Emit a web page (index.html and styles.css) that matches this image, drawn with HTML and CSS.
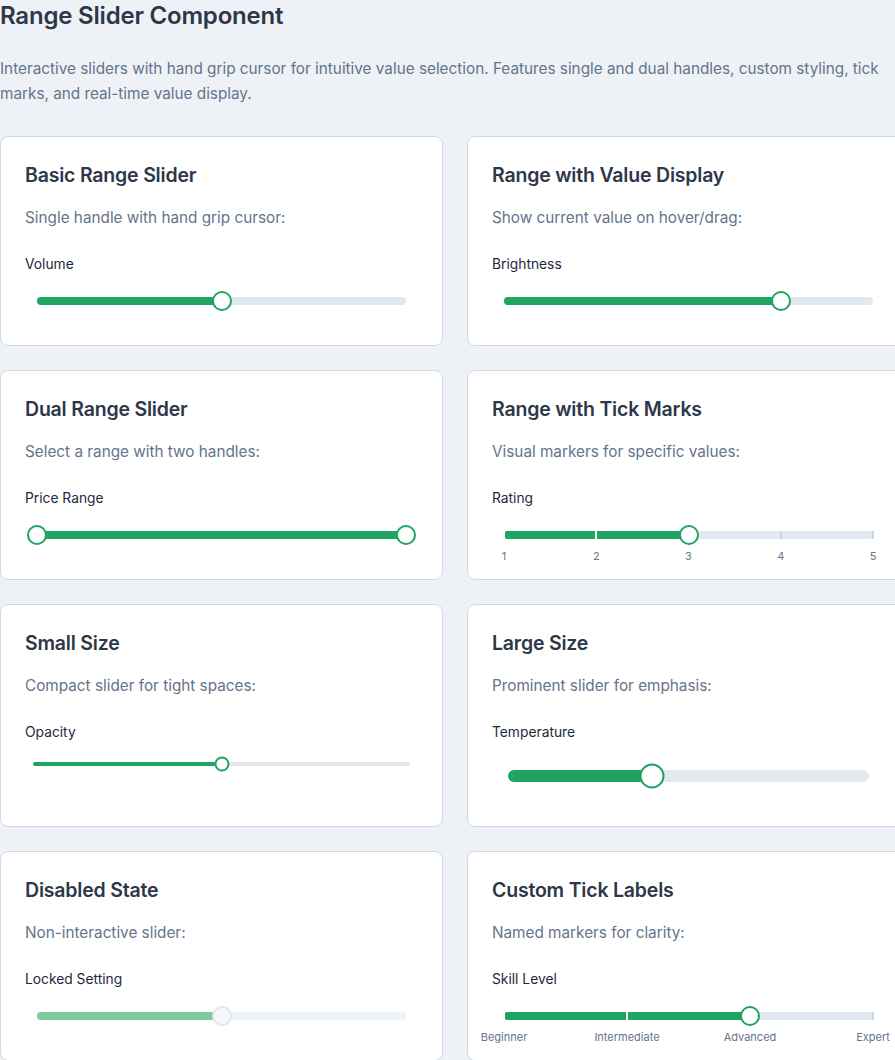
FILE: index.html
```html
<!DOCTYPE html>
<html lang="en">
<head>
<meta charset="utf-8">
<title>Range Slider Component</title>
<link rel="stylesheet" href="styles.css">
</head>
<body>
<main class="page">
  <h1 class="page-title">Range Slider Component</h1>
  <p class="page-desc">Interactive sliders with hand grip cursor for intuitive value selection. Features single and dual handles, custom styling, tick marks, and real-time value display.</p>

  <div class="grid">
    <section class="card">
      <h2 class="card-title">Basic Range Slider</h2>
      <p class="card-desc">Single handle with hand grip cursor:</p>
      <div class="label">Volume</div>
      <div class="slider">
        <div class="track">
          <div class="fill" style="width:50%"></div>
          <div class="thumb" style="left:50%"></div>
        </div>
      </div>
    </section>

    <section class="card">
      <h2 class="card-title">Range with Value Display</h2>
      <p class="card-desc">Show current value on hover/drag:</p>
      <div class="label">Brightness</div>
      <div class="slider">
        <div class="track">
          <div class="fill" style="width:75%"></div>
          <div class="thumb" style="left:75%"></div>
        </div>
      </div>
    </section>

    <section class="card">
      <h2 class="card-title">Dual Range Slider</h2>
      <p class="card-desc">Select a range with two handles:</p>
      <div class="label">Price Range</div>
      <div class="slider">
        <div class="track">
          <div class="fill" style="width:100%"></div>
          <div class="thumb" style="left:0%"></div>
          <div class="thumb" style="left:100%"></div>
        </div>
      </div>
    </section>

    <section class="card">
      <h2 class="card-title">Range with Tick Marks</h2>
      <p class="card-desc">Visual markers for specific values:</p>
      <div class="label">Rating</div>
      <div class="slider">
        <div class="track">
          <div class="fill" style="width:50%"></div>
          <span class="tick on" style="left:0%"></span>
          <span class="tick on" style="left:25%"></span>
          <span class="tick on" style="left:50%"></span>
          <span class="tick" style="left:75%"></span>
          <span class="tick" style="left:100%"></span>
          <div class="thumb" style="left:50%"></div>
          <span class="tick-label" style="left:0%">1</span>
          <span class="tick-label" style="left:25%">2</span>
          <span class="tick-label" style="left:50%">3</span>
          <span class="tick-label" style="left:75%">4</span>
          <span class="tick-label" style="left:100%">5</span>
        </div>
      </div>
    </section>

    <section class="card">
      <h2 class="card-title">Small Size</h2>
      <p class="card-desc">Compact slider for tight spaces:</p>
      <div class="label">Opacity</div>
      <div class="slider slider-sm">
        <div class="track">
          <div class="fill" style="width:50%"></div>
          <div class="thumb" style="left:50%"></div>
        </div>
      </div>
    </section>

    <section class="card">
      <h2 class="card-title">Large Size</h2>
      <p class="card-desc">Prominent slider for emphasis:</p>
      <div class="label">Temperature</div>
      <div class="slider slider-lg">
        <div class="track">
          <div class="fill" style="width:40%"></div>
          <div class="thumb" style="left:40%"></div>
        </div>
      </div>
    </section>

    <section class="card">
      <h2 class="card-title">Disabled State</h2>
      <p class="card-desc">Non-interactive slider:</p>
      <div class="label">Locked Setting</div>
      <div class="slider slider-disabled">
        <div class="track">
          <div class="fill" style="width:50%"></div>
          <div class="thumb" style="left:50%"></div>
        </div>
      </div>
    </section>

    <section class="card">
      <h2 class="card-title">Custom Tick Labels</h2>
      <p class="card-desc">Named markers for clarity:</p>
      <div class="label">Skill Level</div>
      <div class="slider">
        <div class="track">
          <div class="fill" style="width:66.667%"></div>
          <span class="tick on" style="left:0%"></span>
          <span class="tick on" style="left:33.333%"></span>
          <span class="tick on" style="left:66.667%"></span>
          <span class="tick" style="left:100%"></span>
          <div class="thumb" style="left:66.667%"></div>
          <span class="tick-label" style="left:0%">Beginner</span>
          <span class="tick-label" style="left:33.333%">Intermediate</span>
          <span class="tick-label" style="left:66.667%">Advanced</span>
          <span class="tick-label" style="left:100%">Expert</span>
        </div>
      </div>
    </section>
  </div>
</main>
</body>
</html>
```

FILE: styles.css
```css
html, body {
  margin: 0;
  padding: 0;
  overflow: hidden;
}

body {
  background: #eef2f7;
  font-family: Inter, "Noto Sans", "Liberation Sans", sans-serif;
  color: #2d3748;
}

.page {
  width: 910px;
}

.page-title {
  margin: 0;
  font-size: 24px;
  line-height: 32px;
  font-weight: 600;
  color: #2d3748;
  letter-spacing: -0.2px;
}

.page-desc {
  margin: 24px 0 30px;
  font-size: 15.3px;
  line-height: 25px;
  color: #64748b;
}

.grid {
  display: grid;
  grid-template-columns: 1fr 1fr;
  gap: 24px;
}

.card {
  background: #ffffff;
  border: 1px solid #cfd9e4;
  border-radius: 8px;
  padding: 24px;
}

.card-title {
  margin: 0;
  font-size: 19.5px;
  line-height: 29px;
  font-weight: 600;
  color: #2d3748;
  letter-spacing: -0.2px;
}

.card-desc {
  margin: 16px 0 24px;
  font-size: 15.3px;
  line-height: 24px;
  color: #64748b;
}

.label {
  font-size: 13.8px;
  line-height: 20px;
  font-weight: 400;
  color: #1e293b;
}

.slider {
  padding: 0 12px;
  margin: 17px 0 10px;
  height: 20px;
  display: flex;
  align-items: center;
}

.track {
  position: relative;
  flex: 1;
  height: 8px;
  border-radius: 4px;
  background: #e2e8f0;
}

.fill {
  position: absolute;
  left: 0;
  top: 0;
  bottom: 0;
  border-radius: 4px;
  background: #1fa463;
}

.thumb {
  position: absolute;
  top: 50%;
  width: 20px;
  height: 20px;
  box-sizing: border-box;
  border: 2px solid #1fa463;
  border-radius: 50%;
  background: #ffffff;
  transform: translate(-50%, -50%);
  cursor: grab;
}

.tick {
  position: absolute;
  top: 0;
  width: 2px;
  height: 8px;
  margin-left: -1px;
  background: #cbd5e1;
}

.tick.on {
  background: #ffffff;
}

.tick-label {
  position: absolute;
  top: 18px;
  transform: translateX(-50%);
  font-size: 11px;
  line-height: 14px;
  color: #64748b;
  white-space: nowrap;
}

.slider-sm {
  padding: 0 8px;
  margin: 15px 0 10px;
  height: 14px;
}

.slider-sm .track {
  height: 4px;
  border-radius: 2px;
}

.slider-sm .fill {
  border-radius: 2px;
}

.slider-sm .thumb {
  width: 15px;
  height: 15px;
}

.slider-lg {
  padding: 0 16px;
  margin: 22px 0 14px;
  height: 24px;
}

.slider-lg .track {
  height: 12px;
  border-radius: 6px;
}

.slider-lg .fill {
  border-radius: 6px;
}

.slider-lg .thumb {
  width: 25px;
  height: 25px;
}

.slider-disabled .track {
  background: #edf2f7;
}

.slider-disabled .fill {
  background: #7ccaa0;
}

.slider-disabled .thumb {
  border-color: #e2e8f0;
  background: #f5f7fa;
  cursor: not-allowed;
}
```
